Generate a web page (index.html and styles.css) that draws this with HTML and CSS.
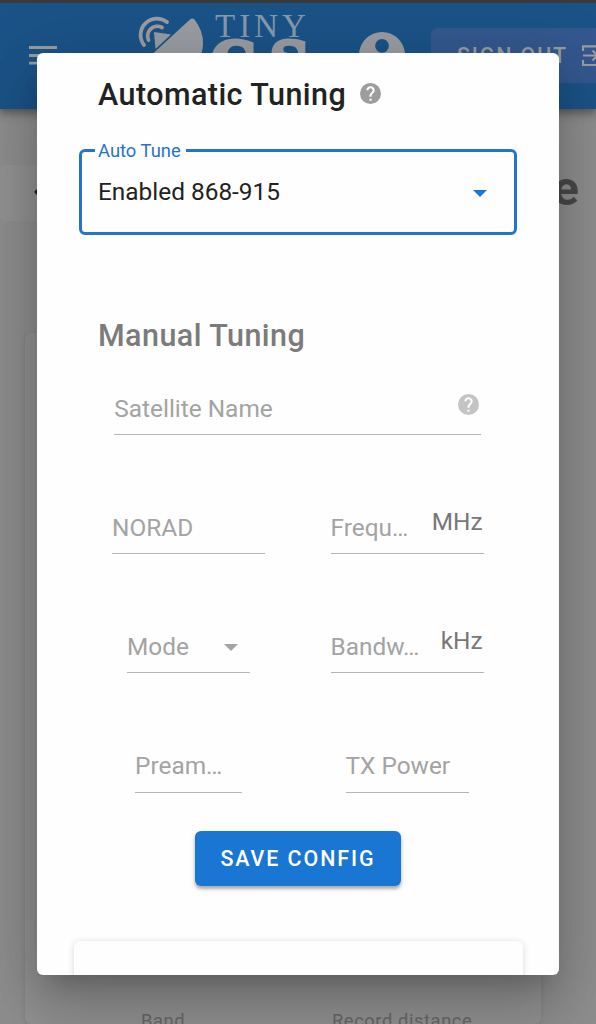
FILE: index.html
```html
<!DOCTYPE html>
<html lang="en">
<head>
<meta charset="utf-8">
<title>Tiny GS</title>
<link rel="stylesheet" href="styles.css">
</head>
<body>
<div class="page">
  <header class="bar">
    <svg class="menu" viewBox="0 0 28 20" width="28" height="20"><path d="M0 1.5h28M0 9.500h28M0 17.200h28" stroke="currentColor" stroke-width="2.800"/></svg>
    <div class="logo">
      <svg class="dish" viewBox="0 0 70 60" width="70" height="60">
        <path d="M8 32A16.400 16.400 0 0 1 31 9M12.500 27A9.700 9.700 0 0 1 26 14.500" fill="none" stroke="currentColor" stroke-width="3.800" stroke-linecap="round"/>
        <path d="M18 19l17 2.500-15.500 14.500z" fill="currentColor"/>
        <path d="M54 6.500Q56 4.500 58.500 6.500Q67.500 18 67 31Q66.500 48 52 60L11 46Z" fill="currentColor"/>
      </svg>
      <div class="brand"><span class="tiny">TINY</span><span class="gs">GS</span></div>
    </div>
    <svg class="user" viewBox="2 2 20 20" width="46" height="46"><path fill="currentColor" d="M12 2A10 10 0 1 0 12 22A10 10 0 0 0 12 2m0 3a3 3 0 1 1 0 6a3 3 0 0 1 0-6m0 14.200c-2.500 0-4.710-1.280-6-3.200c.03-2 4-3.100 6-3.100s5.970 1.100 6 3.100a7.230 7.230 0 0 1-6 3.200"/></svg>
    <div class="signout"><span>SIGN OUT</span>
      <svg viewBox="0 0 24 22" width="24" height="22"><path d="M1 6V1.300H22V20H1V15M1 10.500H15M10.500 5.500l5 5-5 5" fill="none" stroke="currentColor" stroke-width="2.200"/></svg>
    </div>
  </header>
  <div class="heading">
    <div class="back"><svg viewBox="0 0 10 16" width="10" height="16"><path d="M8 2L2 8l6 6" fill="none" stroke="currentColor" stroke-width="3"/></svg></div>
    <h1>e</h1>
  </div>
  <section class="station"><span>Band</span><span>Record distance</span></section>
</div>

<main class="dialog">
  <h2 class="title">Automatic Tuning
    <svg class="help" viewBox="2 2 20 20"><path d="M15.070 11.250l-.9.920C13.450 12.890 13 13.500 13 15h-2v-.5c0-1.110.45-2.110 1.170-2.830l1.240-1.260c.37-.36.59-.86.59-1.410a2 2 0 0 0-4 0H8a4 4 0 0 1 8 0c0 .880-.36 1.670-.93 2.250M13 19h-2v-2h2M12 2A10 10 0 1 0 12 22A10 10 0 0 0 12 2"/></svg>
  </h2>
  <fieldset class="select">
    <legend>Auto Tune</legend>
    <span>Enabled 868-915</span><i class="caret"></i>
  </fieldset>
  <h2 class="title muted">Manual Tuning</h2>
  <div class="fields">
    <div class="field full"><span>Satellite Name</span>
      <svg class="help" viewBox="2 2 20 20"><path d="M15.070 11.250l-.9.920C13.450 12.890 13 13.500 13 15h-2v-.5c0-1.110.45-2.110 1.170-2.830l1.240-1.260c.37-.36.59-.86.59-1.410a2 2 0 0 0-4 0H8a4 4 0 0 1 8 0c0 .880-.36 1.670-.93 2.250M13 19h-2v-2h2M12 2A10 10 0 1 0 12 22A10 10 0 0 0 12 2"/></svg>
    </div>
    <div class="field wide"><span>NORAD</span></div>
    <div class="field wide"><span>Frequ…</span><b>MHz</b></div>
    <div class="field mid"><span>Mode</span><i class="caret"></i></div>
    <div class="field wide"><span>Bandw…</span><b>kHz</b></div>
    <div class="field small"><span>Pream…</span></div>
    <div class="field mid"><span>TX Power</span></div>
  </div>
  <button class="save">SAVE CONFIG</button>
  <div class="panel"></div>
</main>
</body>
</html>
```
FILE: styles.css
```css
* { box-sizing: border-box; }
body {
  margin: 0;
  width: 596px;
  height: 1024px;
  overflow: hidden;
  position: relative;
  font-family: Roboto, sans-serif;
  font-size: 24.4px;
}
.page {
  height: 1024px;
  display: flex;
  flex-direction: column;
  background: #8f8f8f;
  overflow: hidden;
}
.bar {
  flex: none;
  height: 109px;
  display: flex;
  align-items: flex-start;
  overflow: hidden;
  background: #1b5388;
  border-top: 3px solid #3b3b3b;
  color: #9a9da1;
  box-shadow: 0 3px 6px rgba(0,0,0,.2), 0 6px 8px rgba(0,0,0,.14), 0 2px 15px rgba(0,0,0,.12);
}
.menu { flex: none; margin: 43px 0 0 29px; }
.logo { flex: none; display: flex; margin-left: 79px; width: 177px; }
.dish { flex: none; margin-top: 10px; }
.brand { display: flex; flex-direction: column; margin: 8px 0 0 9px; }
.tiny {
  font: 33px/30px "Liberation Serif", serif;
  letter-spacing: 4px;
  color: #8799ab;
}
.gs {
  font: bold 54px/44px "DejaVu Serif", serif;
  -webkit-text-stroke: 4px currentColor;
  letter-spacing: 13px;
  margin: -1px 0 0 -4px;
}
.user { flex: none; margin: 29px 0 0 46px; }
.signout {
  flex: none;
  display: flex;
  align-items: center;
  gap: 14px;
  width: 190px;
  height: 55px;
  margin: 25px 0 0 26px;
  padding-left: 26px;
  border-radius: 6px;
  background: #34588f;
  font-size: 21.4px;
  font-weight: 500;
  letter-spacing: 1.9px;
  white-space: nowrap;
}
.heading {
  flex: none;
  display: flex;
  justify-content: space-between;
  align-items: center;
  height: 56px;
  margin-top: 56px;
  padding-right: 17px;
}
.back {
  display: flex;
  align-items: center;
  width: 98px;
  height: 56px;
  padding: 0 0 2px 34px;
  border-radius: 6px;
  background: #939393;
  color: #222;
}
.heading h1 { margin: -8px 0 0; font-size: 49px; line-height: 56px; color: #4a4a4a; }
.station {
  flex: 1;
  display: flex;
  align-items: flex-end;
  margin: 112px 55px 0 25px;
  padding-left: 116px;
  background: #939393;
  border-radius: 6px;
  box-shadow: 0 1px 5px rgba(0,0,0,.1);
  color: #686868;
  font-size: 18.3px;
  line-height: 22px;
  letter-spacing: .6px;
  white-space: nowrap;
}
.station span { width: 191px; margin-bottom: -8px; }
.dialog {
  position: absolute;
  left: 37px;
  top: 53px;
  width: 522px;
  height: 922px;
  overflow: hidden;
  border-radius: 6px;
  background: #fefefe;
  color: #222;
  box-shadow: 0 17px 23px -11px rgba(0,0,0,.2), 0 37px 58px 5px rgba(0,0,0,.14), 0 14px 70px 12px rgba(0,0,0,.12);
}
.title {
  display: flex;
  align-items: center;
  gap: 14px;
  height: 48px;
  margin: 17px 0 0 61px;
  font-size: 30.5px;
  font-weight: 500;
  letter-spacing: .44px;
}
.title .help { margin-top: -1px; }
.help { width: 21px; height: 21px; fill: #9d9d9d; }
.select {
  display: flex;
  align-items: center;
  justify-content: space-between;
  width: 438px;
  height: 96px;
  margin: 21px 0 0 42px;
  padding: 0 27px 12px 16px;
  border: 3px solid #2474cb;
  border-radius: 6px;
}
.select legend {
  padding: 0 5px 0 3px;
  margin-left: -3px;
  color: #2474cb;
  font-size: 18.4px;
  line-height: 23px;
}
.caret {
  border: 7.5px solid transparent;
  border-top-color: currentColor;
  border-bottom: 0;
}
.select .caret { color: #1976d2; margin-top: 5px; }
.title.muted { margin-top: 76px; color: #7b7b7b; }
.fields {
  display: grid;
  grid-template-columns: 218.5px 218.5px;
  grid-auto-rows: 50px;
  row-gap: 69.2px;
  justify-items: center;
  margin: 26px 0 0 42.3px;
}
.field {
  display: flex;
  justify-content: space-between;
  align-items: center;
  height: 50px;
  padding-bottom: 3px;
  border-bottom: 1.5px solid #b5b5b5;
  color: #a3a3a3;
  white-space: nowrap;
}
.field b { font-weight: 400; color: #777; margin: -12px 1px 0 0; }
.field .help { fill: #c4c4c4; margin: -8px 2px 0 0; }
.field .caret { margin: 3px 12px 0 0; }
.full { grid-column: 1 / 3; width: 367px; }
.wide { width: 153px; }
.mid { width: 123px; }
.small { width: 107px; }
.save {
  display: block;
  width: 206px;
  height: 55px;
  margin: 38px 0 0 158px;
  padding: 0;
  border: 0;
  border-radius: 6px;
  background: #1976d2;
  color: #fff;
  font: 500 21.4px Roboto, sans-serif;
  letter-spacing: 1.95px;
  box-shadow: 0 3px 3px rgba(0,0,0,.25), 0 2px 6px rgba(0,0,0,.12);
}
.panel {
  width: 449px;
  height: 90px;
  margin: 55px 0 0 37px;
  border-radius: 6px;
  background: #fefefe;
  box-shadow: 0 1px 7px rgba(0,0,0,.15);
}
```
